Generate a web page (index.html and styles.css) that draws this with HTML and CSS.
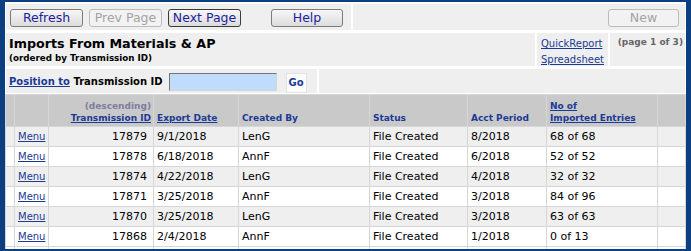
FILE: index.html
```html
<!DOCTYPE html>
<html lang="en">
<head>
    <meta charset="UTF-8">
    <title>Imports From Materials &amp; AP</title>
    <link rel="stylesheet" href="styles.css">
</head>
<body>
    <div class="frame">
        <div class="page">
            <div class="bar bar-tools">
                <div class="cell cell-buttons">
                    <button class="btn">Refresh</button>
                    <button class="btn" disabled>Prev Page</button>
                    <button class="btn btn-focus">Next Page</button>
                    <button class="btn btn-help">Help</button>
                </div>
                <div class="cell cell-new">
                    <button class="btn btn-new" disabled>New</button>
                </div>
            </div>

            <div class="bar bar-title">
                <div class="cell cell-title">
                    <h1>Imports From Materials &amp; AP</h1>
                    <div class="subtitle">(ordered by Transmission ID)</div>
                </div>
                <div class="cell cell-links">
                    <a href="#">QuickReport</a>
                    <a href="#">Spreadsheet</a>
                </div>
                <div class="cell cell-page">(page 1 of 3)</div>
            </div>

            <div class="bar bar-position">
                <div class="cell cell-position">
                    <span class="position-label"><a href="#">Position to</a> Transmission ID</span>
                    <input type="text" class="position-input">
                    <span class="go">Go</span>
                </div>
                <div class="cell cell-fill"></div>
            </div>

            <table class="grid">
                <colgroup>
                    <col style="width: 8px">
                    <col style="width: 33px">
                    <col style="width: 104px">
                    <col style="width: 84px">
                    <col style="width: 130px">
                    <col style="width: 97px">
                    <col style="width: 78px">
                    <col style="width: 110px">
                    <col style="width: 27px">
                </colgroup>
                <thead>
                    <tr>
                        <th></th>
                        <th></th>
                        <th class="num"><span class="sort-note">(descending)</span><br><a href="#">Transmission ID</a></th>
                        <th><a href="#">Export Date</a></th>
                        <th>Created By</th>
                        <th>Status</th>
                        <th>Acct Period</th>
                        <th><a href="#">No of<br>Imported Entries</a></th>
                        <th></th>
                    </tr>
                </thead>
                <tbody id="rows"></tbody>
            </table>
        </div>
    </div>

    <script>
        const imports = [
            { id: 17879, date: '9/1/2018', by: 'LenG', period: '8/2018', entries: '68 of 68' },
            { id: 17878, date: '6/18/2018', by: 'AnnF', period: '6/2018', entries: '52 of 52' },
            { id: 17874, date: '4/22/2018', by: 'LenG', period: '4/2018', entries: '32 of 32' },
            { id: 17871, date: '3/25/2018', by: 'AnnF', period: '3/2018', entries: '84 of 96' },
            { id: 17870, date: '3/25/2018', by: 'LenG', period: '3/2018', entries: '63 of 63' },
            { id: 17868, date: '2/4/2018', by: 'AnnF', period: '1/2018', entries: '0 of 13' }
        ];

        const rows = imports.map(item => `
            <tr>
                <td></td>
                <td class="menu"><a href="#">Menu</a></td>
                <td class="num">${item.id}</td>
                <td>${item.date}</td>
                <td>${item.by}</td>
                <td>File Created</td>
                <td>${item.period}</td>
                <td>${item.entries}</td>
                <td></td>
            </tr>
        `).join('');

        // next page row, cut off by the frame
        document.getElementById('rows').innerHTML = rows +
            '<tr class="row-more"><td></td><td></td><td></td><td></td><td></td><td></td><td></td><td></td><td></td></tr>';
    </script>
</body>
</html>
```

FILE: styles.css
```css
:root {
    --frame: #0c3e82;
    --cell: #efefef;
    --head: #c9c9c9;
    --line: #d6d6d6;
    --link: #1a3a96;
    --text: #000000;
    --muted: #666666;
}

* {
    margin: 0;
    padding: 0;
    box-sizing: border-box;
}

body {
    font-family: 'DejaVu Sans', Verdana, sans-serif;
    color: var(--text);
    background-color: #ffffff;
}

a {
    color: var(--link);
}

.frame {
    width: 691px;
    height: 251px;
    border: solid var(--frame);
    border-width: 2px 5px 2px 5px;
    overflow: hidden;
    background-color: #ffffff;
}

.page {
    padding-top: 2px;
}

.bar {
    display: flex;
    gap: 2px;
    padding: 0 1px;
    margin-bottom: 3px;
}

.cell {
    background-color: var(--cell);
}

/* toolbar */
.bar-tools {
    height: 26px;
}

.cell-buttons {
    width: 345px;
    display: flex;
    align-items: center;
    padding: 1px 0 0 4px;
}

.cell-new {
    flex: 1;
    display: flex;
    align-items: center;
    justify-content: flex-end;
    padding: 1px 6px 0 0;
}

.btn {
    width: 73px;
    height: 18px;
    margin-right: 6px;
    font-family: 'DejaVu Sans', Verdana, sans-serif;
    font-size: 12.5px;
    line-height: 16px;
    color: #1e1e9c;
    background: linear-gradient(#f7f7f7, #dcdcdc);
    border: 1px solid #7c7c7c;
    border-radius: 3px;
}

.btn:disabled {
    color: #a3a3a3;
    background: #f2f2f2;
    border-color: #bcbcbc;
}

.btn-focus {
    border-color: #3a3a3a;
}

.btn-help {
    width: 72px;
    margin-left: 24px;
    margin-right: 0;
}

.btn-new {
    width: 71px;
    margin-right: 0;
}

/* title */
.bar-title {
    height: 33px;
}

.cell-title {
    width: 529px;
    padding: 3px 3px 0;
}

h1 {
    font-size: 12.7px;
    line-height: 15px;
    font-weight: bold;
}

.subtitle {
    margin-top: 2px;
    font-size: 8.75px;
    line-height: 11px;
    font-weight: bold;
}

.cell-links {
    width: 71px;
    padding: 3px 0 0 4px;
    display: flex;
    flex-direction: column;
    font-size: 10px;
    line-height: 16px;
}

.cell-page {
    flex: 1;
    padding: 3px 2px 0 0;
    text-align: right;
    font-size: 9px;
    line-height: 12px;
    font-weight: bold;
    color: var(--muted);
}

/* position to */
.bar-position {
    height: 24px;
    margin-bottom: 1px;
}

.cell-position {
    width: 311px;
    display: flex;
    align-items: flex-start;
    padding: 4px 0 0 3px;
}

.position-label {
    font-size: 10px;
    line-height: 18px;
    font-weight: bold;
}

.position-input {
    width: 108px;
    height: 18px;
    margin-left: 6px;
    background-color: #bfdcfd;
    border: 1px solid;
    border-color: #767676 #d4d4d4 #d4d4d4 #767676;
    outline: none;
}

.go {
    width: 21px;
    height: 20px;
    margin-left: 9px;
    background-color: #fbfbfb;
    border: 1px solid #e2e2e2;
    text-align: center;
    font-size: 10px;
    line-height: 18px;
    font-weight: bold;
    color: var(--link);
}

.cell-fill {
    flex: 1;
}

/* listing */
.grid {
    width: 681px;
    table-layout: fixed;
    border-collapse: separate;
    border-spacing: 1px;
    background-color: var(--line);
}

.grid thead tr {
    height: 31px;
}

.grid th {
    background-color: var(--head);
    vertical-align: bottom;
    text-align: left;
    padding: 0 3px 2px;
    font-size: 9px;
    line-height: 12px;
    font-weight: bold;
    color: var(--link);
    white-space: nowrap;
}

.grid th.num {
    text-align: right;
    padding-right: 2px;
}

.sort-note {
    color: #7d7d9e;
}

.grid tbody tr {
    height: 19px;
}

.grid td {
    background-color: var(--cell);
    padding: 0 3px;
    font-size: 11px;
    line-height: 13px;
    vertical-align: middle;
    white-space: nowrap;
}

.grid tbody tr:nth-child(even) td,
.grid .row-more td {
    background-color: #ffffff;
}

.grid td.num {
    text-align: right;
    padding-right: 6px;
}

.grid td.menu {
    font-size: 10px;
}
```
